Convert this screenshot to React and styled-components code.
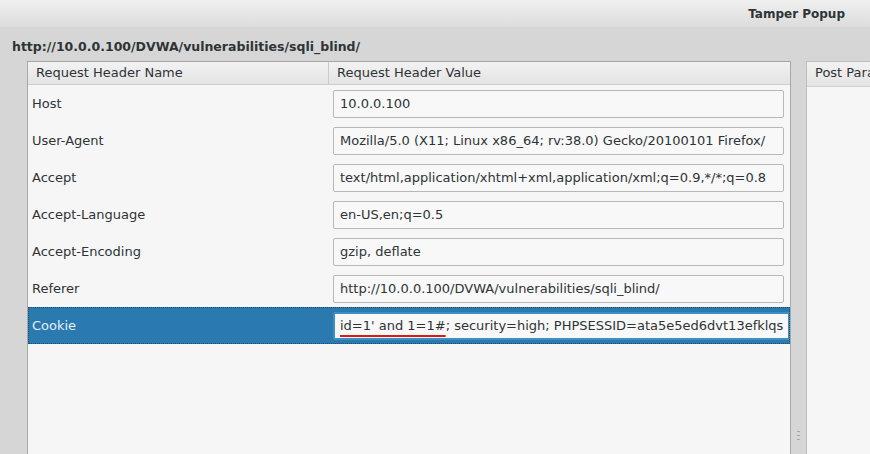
import React from "react";
import styled, { createGlobalStyle } from "styled-components";

const Global = createGlobalStyle`
  html, body {
    margin: 0;
    height: 100%;
    overflow: hidden;
    background: #d6d6d6;
    font-family: "DejaVu Sans", "Noto Sans", sans-serif;
    font-size: 13px;
    color: #2e3436;
  }
  #root { height: 100%; }
`;

const Window = styled.div`
  display: flex;
  flex-direction: column;
  height: 454px;
  background: #d6d6d6;
`;

const TitleBar = styled.div`
  display: flex;
  justify-content: flex-end;
  align-items: center;
  height: 27px;
  padding-right: 25px;
  background: linear-gradient(#f0f0f0, #dcdcdc);
  font-weight: 700;
  font-size: 12px;
  color: #2e3436;
`;

const UrlLabel = styled.div`
  height: 34px;
  line-height: 39px;
  padding-left: 12px;
  font-weight: 700;
  font-size: 12.5px;
  color: #2e3436;
`;

const Panes = styled.div`
  flex: 1;
  display: flex;
  padding-left: 27px;
  min-height: 0;
`;

const HeadersPane = styled.div`
  width: 764px;
  display: flex;
  flex-direction: column;
  background: #f6f6f6;
  border: 1px solid #a8a8a8;
  border-bottom: none;
  box-sizing: border-box;
  overflow: hidden;
`;

const Handle = styled.div`
  width: 15px;
  display: flex;
  align-items: flex-end;
  justify-content: center;
  padding-bottom: 14px;
  box-sizing: border-box;
`;

const PostPane = styled.div`
  flex: 1;
  background: #f6f6f6;
  border-left: 1px solid #bdbdbd;
  border-top: 1px solid #bdbdbd;
  display: flex;
  flex-direction: column;
  overflow: hidden;
`;

const HeaderRow = styled.div`
  display: grid;
  grid-template-columns: ${p => p.$cols || "300px minmax(0, 1fr)"};
  height: ${p => p.$h || 22}px;
  background: linear-gradient(#f2f2f2, #e4e4e4);
  border-bottom: 1px solid #cfcfcf;
`;

const HeaderCell = styled.div`
  padding-left: 8px;
  line-height: 22px;
  border-left: ${p => (p.$sep ? "1px solid #cacaca" : "none")};
  white-space: nowrap;
  overflow: hidden;
  color: #2e3436;
`;

const Row = styled.div`
  display: grid;
  grid-template-columns: 300px minmax(0, 1fr);
  height: 37px;
  align-items: center;
  background: ${p => (p.$selected ? "#2a7ab0" : "transparent")};
  outline: ${p => (p.$selected ? "1px dotted #1a4f73" : "none")};
  outline-offset: -1px;
  color: ${p => (p.$selected ? "#e6eef5" : "#2e3436")};
`;

const NameCell = styled.div`
  padding-left: 4px;
`;

const ValueCell = styled.div`
  min-width: 0;
  padding-left: 5px;
  padding-right: ${p => (p.$selected ? 0 : 6)}px;
`;

const Field = styled.div`
  height: 28px;
  box-sizing: border-box;
  border: ${p => (p.$focused ? "2px solid #3f8fc4" : "1px solid #b8b8b8")};
  border-radius: 2px;
  background: #f8f8f8;
  padding-left: ${p => (p.$focused ? 5 : 6)}px;
  line-height: ${p => (p.$focused ? 24 : 26)}px;
  white-space: nowrap;
  overflow: hidden;
  color: #2e3436;
`;

const Marked = styled.span`
  text-decoration: underline;
  text-decoration-color: #d81b1b;
  text-decoration-thickness: 2px;
  text-underline-offset: 5px;
`;

const Empty = styled.div`
  flex: 1;
`;

const headers = [
  ["Host", "10.0.0.100"],
  ["User-Agent", "Mozilla/5.0 (X11; Linux x86_64; rv:38.0) Gecko/20100101 Firefox/"],
  ["Accept", "text/html,application/xhtml+xml,application/xml;q=0.9,*/*;q=0.8"],
  ["Accept-Language", "en-US,en;q=0.5"],
  ["Accept-Encoding", "gzip, deflate"],
  ["Referer", "http://10.0.0.100/DVWA/vulnerabilities/sqli_blind/"],
];

export default function App() {
  return (
    <Window>
      <Global />
      <TitleBar>Tamper Popup</TitleBar>
      <UrlLabel>http://10.0.0.100/DVWA/vulnerabilities/sqli_blind/</UrlLabel>
      <Panes>
        <HeadersPane>
          <HeaderRow>
            <HeaderCell>Request Header Name</HeaderCell>
            <HeaderCell $sep>Request Header Value</HeaderCell>
          </HeaderRow>
          {headers.map(([name, value]) => (
            <Row key={name}>
              <NameCell>{name}</NameCell>
              <ValueCell>
                <Field>{value}</Field>
              </ValueCell>
            </Row>
          ))}
          <Row $selected>
            <NameCell>Cookie</NameCell>
            <ValueCell $selected>
              <Field $focused>
                <Marked>id=1' and 1=1#</Marked>; security=high; PHPSESSID=ata5e5ed6dvt13efklqs
              </Field>
            </ValueCell>
          </Row>
          <Empty />
        </HeadersPane>
        <Handle>
          <svg width="3" height="9" viewBox="0 0 3 9">
            <rect x="0" y="0" width="3" height="1" fill="#a8a8a8" />
            <rect x="0" y="4" width="3" height="1" fill="#a8a8a8" />
            <rect x="0" y="8" width="3" height="1" fill="#a8a8a8" />
          </svg>
        </Handle>
        <PostPane>
          <HeaderRow $cols="1fr" $h={24}>
            <HeaderCell>Post Parameter Name</HeaderCell>
          </HeaderRow>
        </PostPane>
      </Panes>
    </Window>
  );
}
